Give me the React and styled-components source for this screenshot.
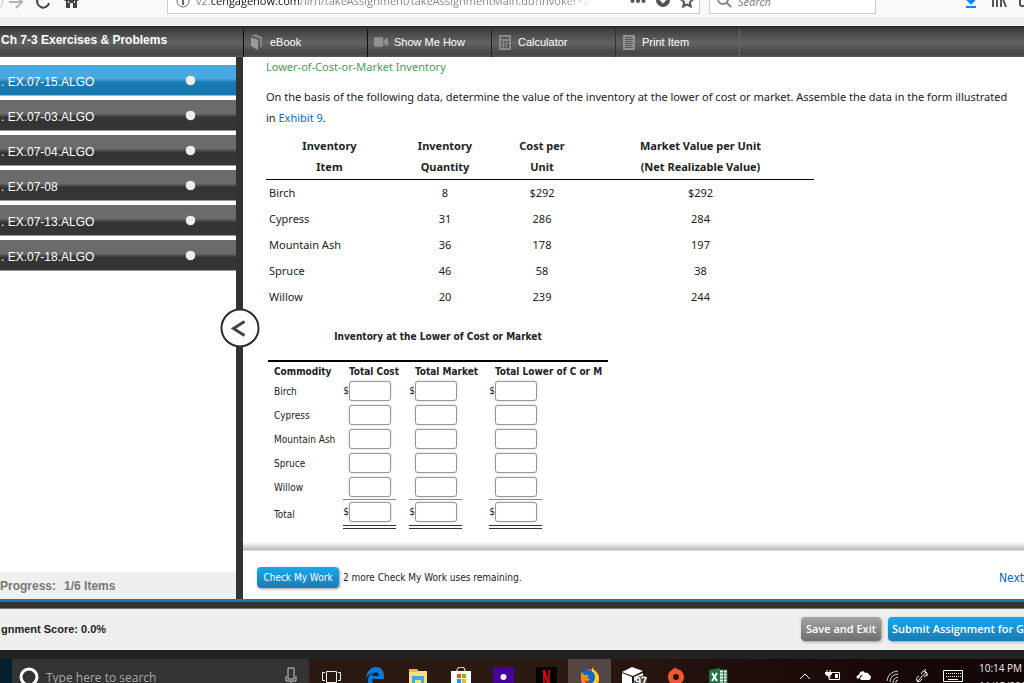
import React from "react";
import styled, { createGlobalStyle } from "styled-components";
import { FaVideo } from "react-icons/fa";

const assignments = [
    "EX.07-15.ALGO",
    "EX.07-03.ALGO",
    "EX.07-04.ALGO",
    "EX.07-08",
    "EX.07-13.ALGO",
    "EX.07-18.ALGO",
];

const inventory = [
    { item: "Birch", quantity: "8", cost: "$292", market: "$292" },
    { item: "Cypress", quantity: "31", cost: "286", market: "284" },
    { item: "Mountain Ash", quantity: "36", cost: "178", market: "197" },
    { item: "Spruce", quantity: "46", cost: "58", market: "38" },
    { item: "Willow", quantity: "20", cost: "239", market: "244" },
];

const answerColumns = ["Total Cost", "Total Market", "Total Lower of C or M"];

const App = () => (
    <Screen>
        <GlobalStyle />
        <BrowserBar />
        <CourseHeader />
        <Main>
            <Sidebar />
            <Divider>
                <CollapseButton type="button" aria-label="Collapse list">
                    <svg width="16" height="18" viewBox="0 0 16 18" fill="none" stroke="#444" strokeWidth="3">
                        <path d="M14 2 L3 9 L14 16" />
                    </svg>
                </CollapseButton>
            </Divider>
            <Content>
                <Question>
                    <Topic>Lower-of-Cost-or-Market Inventory</Topic>
                    <Paragraph>
                        On the basis of the following data, determine the value of the inventory at the lower of cost or market. Assemble the data in the form illustrated
                        <br />
                        in <Link href="#exhibit9">Exhibit 9</Link>.
                    </Paragraph>
                    <InventoryTable />
                    <AnswerTable />
                </Question>
                <CheckBar>
                    <CheckButton type="button">Check My Work</CheckButton>
                    <span>2 more Check My Work uses remaining.</span>
                    <NextLink href="#next">Next</NextLink>
                </CheckBar>
            </Content>
        </Main>
        <BlueRule />
        <Footer>
            <Score>gnment Score: 0.0%</Score>
            <SaveButton type="button">Save and Exit</SaveButton>
            <SubmitButton type="button">Submit Assignment for Grading</SubmitButton>
        </Footer>
        <Taskbar />
    </Screen>
)

const BrowserBar = () => (
    <Browser>
        <NavIcons>
            <svg width="84" height="24" viewBox="0 0 84 24" fill="none">
                <path d="M0 0 A22 22 0 0 1 0 23" stroke="#ccc" />
                <path d="M9 16 H21 M16 10 L22 16 L16 22" stroke="#b2b2b2" strokeWidth="2" />
                <path d="M49 17 A6 6 0 1 1 47 11" stroke="#444" strokeWidth="2" />
                <path d="M50 8 V14 H44 Z" fill="#444" />
                <path d="M64 15 L71.500 8 L79 15 H77 V22 H73 V17 H70 V22 H66 V15 Z" fill="#444" />
                <path d="M68 16 H69 M74 16 H75" stroke="#f9f9fa" strokeWidth="2" />
            </svg>
        </NavIcons>
        <AddressBar>
            <svg width="14" height="14" viewBox="0 0 14 14" fill="none" stroke="#666">
                <circle cx="7" cy="7" r="6" />
                <path d="M7 6 V11 M7 3 V5" strokeWidth="2" />
            </svg>
            <Address>
                v2.<b>cengagenow.com</b>/ilrn/takeAssignment/takeAssignmentMain.do?invoker=a
            </Address>
            <svg width="16" height="14" viewBox="0 0 16 14" fill="#555">
                <circle cx="2.500" cy="7" r="2" /><circle cx="8" cy="7" r="2" /><circle cx="13.500" cy="7" r="2" />
            </svg>
            <svg width="14" height="14" viewBox="0 0 14 14">
                <path d="M0 0 H14 V6 A7 7 0 0 1 0 6 Z" fill="#555" />
                <path d="M4 5 L7 8 L10 5" stroke="#fff" strokeWidth="2" fill="none" />
            </svg>
            <svg width="14" height="14" viewBox="0 0 14 14" fill="none" stroke="#555" strokeWidth="2">
                <path d="M7 1 L8.800 5 L13 5.500 L9.800 8.300 L10.800 12.500 L7 10.300 L3.200 12.500 L4.200 8.300 L1 5.500 L5.200 5 Z" />
            </svg>
        </AddressBar>
        <SearchBox>
            <svg width="16" height="16" viewBox="0 0 16 16" fill="none" stroke="#888" strokeWidth="2">
                <circle cx="7" cy="6" r="5" />
                <path d="M10 9 L15 14" />
            </svg>
            <SearchInput type="text" placeholder="Search" aria-label="Search the web" />
        </SearchBox>
        <BrowserTools>
            <svg width="60" height="24" viewBox="0 0 60 24" fill="none">
                <path d="M7 6 V17 M2 12 L7 17 L12 12" stroke="#0a84ff" strokeWidth="2.500" />
                <path d="M2 21 H12" stroke="#0a84ff" strokeWidth="2" />
                <path d="M29 8 V21 M33 8 V21 M37 8 V21 M37 8 L42 21" stroke="#555" strokeWidth="2" />
                <path d="M68 8 H57 Q56 8 56 10 V18 Q56 20 58 20 H68" stroke="#555" strokeWidth="2" />
            </svg>
        </BrowserTools>
    </Browser>
)

const CourseHeader = () => (
    <Header>
        <HeaderTitle>Ch 7-3 Exercises &amp; Problems</HeaderTitle>
        <Tool type="button" $edge="#111">
            <svg width="14" height="16" viewBox="0 0 14 16" fill="#999">
                <path d="M1 3 L8 6 V16 L1 12 Z" />
                <path d="M1 2 L5 0 L12 3 V13 L10 13 V5 L3 2 Z" fill="#858585" />
            </svg>
            eBook
        </Tool>
        <Tool type="button" $edge="#111">
            <FaVideo size={14} color="#909090" />
            Show Me How
        </Tool>
        <Tool type="button" $edge="#222">
            <svg width="14" height="15" viewBox="-1 0 14 15">
                <path d="M0 0 H12 V15 H0 Z" fill="#888" />
                <path d="M2 2 H10 V4 H2 Z M2 6 H4 V8 H2 Z M5 6 H7 V8 H5 Z M8 6 H10 V8 H8 Z M2 9 H4 V10 H2 Z M5 9 H7 V10 H5 Z M8 9 H10 V13 H8 Z M2 11 H4 V13 H2 Z M5 11 H7 V13 H5 Z" fill="#555" />
            </svg>
            Calculator
        </Tool>
        <Tool type="button" $edge="#333">
            <svg width="14" height="15" viewBox="-1 0 14 15">
                <path d="M0 0 H12 V15 H0 Z" fill="#909090" />
                <path d="M2 2.500 H9 M2 4.500 H10 M2 6.500 H9 M2 8.500 H10 M2 10.500 H9 M2 12.500 H10" stroke="#555" />
            </svg>
            Print Item
        </Tool>
        <ToolEnd />
    </Header>
)

const Sidebar = () => (
    <Aside>
        <AssignmentList>
            {assignments.map((name, i) => (
                <AssignmentRow key={name}>
                    <AssignmentLink href={"#" + name} $active={i === 0}>
                        <span>. {name}</span>
                        <Dot />
                    </AssignmentLink>
                </AssignmentRow>
            ))}
        </AssignmentList>
        <Progress>
            <span>Progress:</span>
            <span>1/6 Items</span>
        </Progress>
    </Aside>
)

const InventoryTable = () => (
    <DataTable>
        <colgroup>
            <Col $width={127} /><Col $width={104} /><Col $width={90} /><Col $width={227} />
        </colgroup>
        <thead>
            <tr>
                <DataHead>Inventory<br />Item</DataHead>
                <DataHead>Inventory<br />Quantity</DataHead>
                <DataHead>Cost per<br />Unit</DataHead>
                <DataHead>Market Value per Unit<br />(Net Realizable Value)</DataHead>
            </tr>
        </thead>
        <tbody>
            {inventory.map((row) => (
                <tr key={row.item}>
                    <DataCell $left>{row.item}</DataCell>
                    <DataCell>{row.quantity}</DataCell>
                    <DataCell>{row.cost}</DataCell>
                    <DataCell>{row.market}</DataCell>
                </tr>
            ))}
        </tbody>
    </DataTable>
)

const AnswerTable = () => (
    <Answers>
        <caption>Inventory at the Lower of Cost or Market</caption>
        <colgroup>
            <Col $width={75} /><Col $width={66} /><Col $width={80} /><Col $width={119} />
        </colgroup>
        <thead>
            <tr>
                <AnswerHead>Commodity</AnswerHead>
                {answerColumns.map((column) => <AnswerHead key={column}>{column}</AnswerHead>)}
            </tr>
        </thead>
        <tbody>
            {inventory.map(({ item }, i) => (
                <AnswerRow key={item} name={item} dollar={i === 0} />
            ))}
            <AnswerRow name="Total" dollar total />
        </tbody>
    </Answers>
)

const AnswerRow = ({ name, dollar, total }) => (
    <tr>
        <AnswerLabel scope="row">{name}</AnswerLabel>
        {answerColumns.map((column) => (
            <AnswerCell key={column}>
                <Amount $total={total}>
                    <Dollar>{dollar ? "$" : ""}</Dollar>
                    <AmountInput type="text" aria-label={name + " " + column} />
                </Amount>
            </AnswerCell>
        ))}
    </tr>
)

const Taskbar = () => (
    <Tasks>
        <StartEdge />
        <TaskSearch>
            <svg width="20" height="20" viewBox="0 0 20 20" fill="none" stroke="#fff" strokeWidth="3">
                <circle cx="10" cy="10" r="8" />
            </svg>
            <TaskInput type="text" placeholder="Type here to search" aria-label="Type here to search" />
            <svg width="12" height="20" viewBox="0 0 12 20" fill="none" stroke="#ccc">
                <path d="M3 1 H9 V12 H3 Z M1 9 V14 H11 V9 M6 14 V18 M3 18 H9" />
            </svg>
        </TaskSearch>
        <TaskButton type="button" aria-label="Task view">
            <svg width="20" height="24" viewBox="0 0 20 24" fill="none" stroke="#eee">
                <path d="M4.500 4.500 H14.500 V15.500 H4.500 Z M3 5.500 H0.500 V13.500 H3 M16 5.500 H18.500 V13.500 H16" />
            </svg>
        </TaskButton>
        <TaskButton type="button" aria-label="Edge">
            <svg width="20" height="24" viewBox="0 0 20 24">
                <path d="M1 11 C2 4 6 0 11 0 C17 0 19 5 19 9 V12 H7 C7 18 13 19 18 16 V20 C11 24 2 21 3 13 C3 9 6 7 9 6 C5 6 3 8 1 11 Z M7 9 H14 C14 4 8 4 7 9 Z" fill="#0a7ad8" fillRule="evenodd" />
            </svg>
        </TaskButton>
        <TaskButton type="button" aria-label="File explorer">
            <svg width="20" height="24" viewBox="0 0 20 24">
                <path d="M1 2 H9 L10 4 H19 V22 H1 Z" fill="#fbdc7c" />
                <path d="M1 2 H9 L10 4 L9 5 H1 Z" fill="#e6b845" />
                <path d="M4 9 H16 V22 H13 V13 H7 V22 H4 Z" fill="#3fa9e6" />
            </svg>
        </TaskButton>
        <TaskButton type="button" aria-label="Store">
            <svg width="20" height="24" viewBox="0 0 20 24">
                <path d="M6 5 V3 Q6 0 10 0 Q14 0 14 3 V5" fill="none" stroke="#fff" />
                <path d="M0 4 H20 V24 H0 Z" fill="#fff" />
                <path d="M6 7 H10 V11 H6 Z" fill="#f25022" />
                <path d="M11 7 H15 V11 H11 Z" fill="#7fba00" />
                <path d="M6 12 H10 V16 H6 Z" fill="#00a4ef" />
                <path d="M11 12 H15 V16 H11 Z" fill="#ffb900" />
            </svg>
        </TaskButton>
        <TaskButton type="button" aria-label="Music">
            <svg width="21" height="24" viewBox="0 0 21 24">
                <path d="M0 0 H21 V24 H0 Z" fill="#46009c" />
                <circle cx="10.500" cy="10" r="3" fill="#f4eefa" />
            </svg>
        </TaskButton>
        <TaskButton type="button" aria-label="Netflix">
            <svg width="21" height="24" viewBox="0 0 21 24">
                <path d="M0 0 H21 V24 H0 Z" fill="#000" />
                <path d="M8 3 V20 M13 3 V20" stroke="#b1060f" strokeWidth="2" />
                <path d="M8 3 L13 20" stroke="#e50914" strokeWidth="2" />
            </svg>
        </TaskButton>
        <TaskButton type="button" aria-label="Firefox" $open>
            <svg width="20" height="24" viewBox="0 0 20 24">
                <circle cx="10" cy="11" r="9" fill="#ff4a36" />
                <path d="M12 0 C13 3 19 5 19 12 C19 17 15 20 10 20 C14 16 16 10 12 5 Z" fill="#ffd02e" />
                <path d="M3 4 C7 2 10 3 14 6 C16 10 15 16 10 16 C6 16 4 13 5 9 Z" fill="#0a67c9" />
                <path d="M1 5 L4 8 L9 8 L7 11 L10 12 C9 15 5 14 4 12 C5 18 10 19 14 17 C9 22 0 19 1 10 Z" fill="#ff8a1c" />
            </svg>
        </TaskButton>
        <TaskButton type="button" aria-label="Mail">
            <svg width="28" height="24" viewBox="-3 0 28 24">
                <path d="M0 5 L10 0 L21 4 L11 9 Z M0 6 L10 10 V24 H0 Z M12 10 L21 6 V12 L12 20 Z" fill="#fff" />
                <circle cx="20" cy="17" r="8" fill="#444" stroke="#888" />
                <text x="13" y="18" fontFamily="Liberation Sans, sans-serif" fontSize="11" fontWeight="bold" fill="#fff">97</text>
            </svg>
        </TaskButton>
        <TaskButton type="button" aria-label="Origin">
            <svg width="16" height="24" viewBox="0 0 16 24">
                <path d="M9 0 L8 2 C13 2 16 6 16 10 C16 15 12 17 8 20 L7 18 C3 18 0 14 0 10 C0 5 4 2 9 0 Z M8 7 A3 3 0 1 0 8 13 A3 3 0 1 0 8 7 Z" fill="#f0592b" fillRule="evenodd" />
            </svg>
        </TaskButton>
        <TaskButton type="button" aria-label="Excel">
            <svg width="20" height="24" viewBox="0 0 20 24">
                <path d="M10 3 H18 V17 H10 Z" fill="#fff" stroke="#217346" />
                <path d="M11 6 H18 M11 9 H18 M11 12 H18 M11 15 H18 M14.500 3 V17" stroke="#217346" />
                <path d="M0 3 L11 1 V20 L0 18 Z" fill="#217346" />
                <path d="M3 6 L8 14 M8 6 L3 14" stroke="#fff" strokeWidth="2" />
            </svg>
        </TaskButton>
        <Tray>
            <svg width="12" height="24" viewBox="0 0 12 24" fill="none" stroke="#fff">
                <path d="M1 12 L6 7 L11 12" />
            </svg>
            <svg width="16" height="24" viewBox="0 0 16 24" fill="none" stroke="#fff">
                <path d="M6 5.500 H14.500 V12.500 H4 V10" />
                <path d="M2 3 V5 M5 3 V5 M3.500 8 V10 H6" />
                <path d="M0 5 H7 V7 L5 9 H2 L0 7 Z M10 7 H13 V11 H10 Z" fill="#fff" stroke="none" />
            </svg>
            <svg width="16" height="24" viewBox="0 0 16 24" fill="#fff">
                <path d="M2 12 C0 11 0 8 3 8 C3 4 8 3 9 6 C12 5 13 7 13 8 C16 8 15 13 13 13 H6 C3 13 4 9 7 9 C6 7 3 9 4 10 Z" />
            </svg>
            <svg width="14" height="24" viewBox="0 0 14 24" fill="none" stroke="#ccc">
                <path d="M1 14 Q2 5 12 4 M4 15 Q4 8 12 7 M7 16 Q7 11 12 10 M10 16 Q9 13 12 13" />
            </svg>
            <svg width="14" height="24" viewBox="0 0 14 24" fill="none" stroke="#fff">
                <path d="M2 15 L11 5 M6 7 Q8 3 10 4 L12 6 Q13 8 9 10 M9 4 L11 2 M4 9 Q0 11 2 14 Q5 16 7 12 M11 8 L13 8" />
            </svg>
            <svg width="20" height="24" viewBox="0 0 20 24" fill="none" stroke="#fff">
                <path d="M0.500 3.500 H19.500 V14.500 H0.500 Z" />
                <path d="M3 6.500 H18 M3 9.500 H18" strokeDasharray="1 1" />
                <path d="M5 12.500 H15" />
            </svg>
        </Tray>
        <Clock>
            <span>10:14 PM</span>
            <span>11/15/2017</span>
        </Clock>
    </Tasks>
)

export default App

const sans = `"Liberation Sans", Arial, sans-serif`;
const wide = `"Noto Sans", Verdana, sans-serif`;
const condensed = `"DejaVu Sans Condensed", Tahoma, sans-serif`;
const system = `"Open Sans", "Segoe UI", sans-serif`;

const GlobalStyle = createGlobalStyle`
    * {
        box-sizing: border-box;
    }
    body {
        margin: 0;
        overflow: hidden;
        font-family: ${sans};
        color: #222;
    }
    button, input {
        font-family: inherit;
        margin: 0;
    }
    svg {
        flex-shrink: 0;
        display: block;
    }
`;

const Screen = styled.div`
    display: flex;
    flex-direction: column;
    height: 100vh;
    overflow: hidden;
    background: #fff;
`;

const Browser = styled.div`
    display: flex;
    align-items: flex-end;
    flex: 0 0 26px;
    height: 26px;
    overflow: hidden;
    padding-bottom: 12px;
    background: linear-gradient(#f9f9fa 17px, #eee 17px, #eee 25px, #fff 25px);
`;

const NavIcons = styled.div`
    flex: 0 0 167px;
    padding-bottom: 4px;
`;

const AddressBar = styled.div`
    display: flex;
    align-items: center;
    gap: 10px;
    flex: 1;
    height: 26px;
    min-width: 0;
    padding: 0 5px 0 8px;
    background: #fff;
    border: 1px solid #ccc;
    svg:first-child {
        margin-right: -4px;
    }
`;

const Address = styled.div`
    flex: 1;
    overflow: hidden;
    white-space: nowrap;
    font-family: ${system};
    font-size: 11px;
    line-height: 18px;
    color: #888;
    margin-right: 26px;
    mask-image: linear-gradient(to right, #000 92%, transparent);
    b {
        font-weight: normal;
        color: #111;
    }
`;

const SearchBox = styled.div`
    display: flex;
    align-items: center;
    gap: 4px;
    flex: 0 0 167px;
    height: 26px;
    margin-left: 9px;
    padding-left: 6px;
    background: #fff;
    border: 1px solid #ccc;
`;

const SearchInput = styled.input`
    width: 120px;
    border: 0;
    background: none;
    font-family: ${system};
    font-size: 11px;
    &::placeholder {
        font-style: italic;
        color: #777;
    }
`;

const BrowserTools = styled.div`
    flex: 0 0 148px;
    padding-left: 88px;
    padding-bottom: 4px;
`;

const Header = styled.header`
    display: flex;
    align-items: flex-end;
    flex: 0 0 31px;
    background: linear-gradient(#333, #404040 10%, #636363 52%, #444 90%, #5a5a5a);
    border-top: 1px solid #222;
`;

const HeaderTitle = styled.h1`
    flex: 0 0 243px;
    margin: 0;
    font-size: 12px;
    line-height: 16px;
    color: #fff;
    padding: 0 0 9px 1px;
    white-space: nowrap;
`;

const Tool = styled.button`
    display: flex;
    align-items: center;
    gap: 6px;
    flex: 0 0 124px;
    height: 28px;
    padding: 0 0 2px 6px;
    border: 0;
    border-left: 1px solid ${(props) => props.$edge};
    background: none;
    color: #fff;
    font-size: 11px;
`;

const ToolEnd = styled.span`
    height: 28px;
    border-left: 1px solid #666;
`;

const Main = styled.main`
    display: flex;
    flex: 1;
    min-height: 0;
`;

const Aside = styled.aside`
    display: flex;
    flex-direction: column;
    justify-content: space-between;
    flex: 0 0 236px;
`;

const AssignmentList = styled.ul`
    list-style: none;
    margin: 0;
    padding: 8px 0 0;
`;

const AssignmentRow = styled.li`
    height: 31px;
    margin-bottom: 4px;
`;

const AssignmentLink = styled.a`
    display: flex;
    align-items: center;
    justify-content: space-between;
    height: 31px;
    padding-right: 41px;
    padding-left: 1px;
    color: #fff;
    font-size: 12px;
    line-height: 17px;
    text-decoration: none;
    background: ${(props) => props.$active
        ? "linear-gradient(#49a8e0 45%, #1a7ab3 58%, #1876ae)"
        : "linear-gradient(#6b6b6b 45%, #343434 58%, #353535)"};
    border-bottom: 1px solid ${(props) => props.$active ? "#8fc0dd" : "#999"};
    span:first-child {
        padding-top: 4px;
    }
`;

const Dot = styled.span`
    width: 9px;
    height: 9px;
    border-radius: 50%;
    background: #eee;
    box-shadow: 0 0 1px #fff;
`;

const Progress = styled.div`
    display: flex;
    gap: 8px;
    height: 27px;
    line-height: 28px;
    background: #efefef;
    color: #777;
    font-size: 12px;
    font-weight: bold;
`;

const Divider = styled.div`
    position: relative;
    flex: 0 0 7px;
    background: #333;
`;

/* sits over the divider and both panels */
const CollapseButton = styled.button`
    position: absolute;
    top: 50%;
    left: 50%;
    transform: translate(-50%, -50%);
    display: flex;
    align-items: center;
    justify-content: center;
    width: 39px;
    height: 39px;
    padding: 0 3px 0 0;
    border: 2px solid #2b2b2b;
    border-radius: 50%;
    background: #fff;
`;

const Content = styled.section`
    display: flex;
    flex-direction: column;
    flex: 1;
    min-width: 0;
    overflow: hidden;
`;

const Question = styled.div`
    flex: 1;
    padding-left: 23px;
    font-family: ${wide};
    font-size: 11px;
    line-height: 21px;
`;

const Topic = styled.h2`
    margin: 0 0 10px;
    font-size: 11px;
    font-weight: normal;
    line-height: 19px;
    color: #4f9a56;
`;

const Paragraph = styled.p`
    margin: 0 0 7px;
    white-space: nowrap;
`;

const Link = styled.a`
    color: #0b66c3;
    text-decoration: none;
`;

const Col = styled.col`
    width: ${(props) => props.$width}px;
`;

const DataTable = styled.table`
    table-layout: fixed;
    width: 548px;
    border-collapse: collapse;
`;

const DataHead = styled.th`
    padding: 0 0 2px;
    border-bottom: 1px solid #000;
`;

const DataCell = styled.td`
    height: 26px;
    padding: 0 3px;
    text-align: ${(props) => props.$left ? "left" : "center"};
`;

const Answers = styled.table`
    table-layout: fixed;
    width: 340px;
    margin: 19px 0 0 2px;
    border-collapse: collapse;
    font-family: ${condensed};
    font-size: 10px;
    line-height: 16px;
    caption {
        padding-bottom: 15px;
        font-weight: bold;
        white-space: nowrap;
    }
`;

const AnswerHead = styled.th`
    height: 17px;
    padding: 2px 0 0 6px;
    border-top: 2px solid #000;
    text-align: left;
    line-height: 15px;
    white-space: nowrap;
`;

const AnswerLabel = styled.th`
    padding: 3px 0 0 6px;
    font-weight: normal;
    text-align: left;
    white-space: nowrap;
`;

const AnswerCell = styled.td`
    padding: 0;
`;

const Amount = styled.div`
    display: flex;
    align-items: center;
    width: 53px;
    height: ${(props) => props.$total ? "30px" : "24px"};
    ${(props) => props.$total && `
        border-top: 1px solid #888;
        border-bottom: 4px double #333;
    `}
`;

const Dollar = styled.span`
    flex: 0 0 6px;
    text-align: right;
`;

const AmountInput = styled.input`
    width: 42px;
    height: 20px;
    padding: 0 3px;
    border: 1px solid #999;
    border-radius: 3px;
    background: #fff;
    font-size: 10px;
    box-shadow: 0 0 2px #bbb;
`;

const CheckBar = styled.div`
    display: flex;
    align-items: center;
    gap: 4px;
    flex: 0 0 57px;
    height: 57px;
    padding: 14px 0 0 14px;
    font-family: ${condensed};
    font-size: 10px;
    background: linear-gradient(#fff, #bbb 8px, #fff 9px);
`;

const GlossButton = styled.button`
    border: 0;
    border-radius: 4px;
    color: #fff;
    white-space: nowrap;
    background: linear-gradient(#14aaee, #1b7ab4);
    box-shadow: 1px 1px 3px #999;
`;

const CheckButton = styled(GlossButton)`
    height: 21px;
    width: 82px;
    padding: 0;
    font-size: 10px;
`;

const NextLink = styled(Link)`
    margin-left: auto;
    font-size: 12px;
`;

const BlueRule = styled.div`
    flex: 0 0 9px;
    background: linear-gradient(#1a78ae 3px, #333 3px);
`;

const Footer = styled.footer`
    display: flex;
    align-items: center;
    gap: 7px;
    flex: 0 0 42px;
    overflow: hidden;
    padding-bottom: 2px;
    background: #efefef;
    border-top: 1px solid #777;
`;

const Score = styled.strong`
    flex: 1;
    padding-left: 1px;
    font-size: 11px;
`;

const SaveButton = styled(GlossButton)`
    width: 80px;
    height: 24px;
    padding: 0;
    font-family: ${system};
    font-size: 11px;
    font-weight: 600;
    background: linear-gradient(#a5a5a5, #6e6e6e);
`;

const SubmitButton = styled(SaveButton)`
    width: 136px;
    padding-left: 4px;
    overflow: hidden;
    text-align: left;
    border-radius: 4px 0 0 4px;
    background: linear-gradient(#14aaee, #1b7ab4);
`;

const Tasks = styled.div`
    display: flex;
    align-items: flex-start;
    flex: 0 0 33px;
    height: 33px;
    overflow: hidden;
    border-top: 9px solid #222;
    background: linear-gradient(to right, #2a1710, #2b1a13 55%, #1d0c0a 75%, #120606);
`;

const StartEdge = styled.div`
    flex: 0 0 12px;
    height: 40px;
    background: #03202c;
`;

const TaskSearch = styled.div`
    display: flex;
    align-items: center;
    flex: 0 0 297px;
    height: 36px;
    margin-right: 1px;
    padding: 0 12px 0 7px;
    background: #333;
`;

const TaskInput = styled.input`
    flex: 1;
    min-width: 0;
    padding: 0 0 0 7px;
    border: 0;
    background: none;
    color: #fff;
    font-family: ${system};
    font-size: 12px;
    &::placeholder {
        color: #aaa;
    }
`;

const TaskButton = styled.button`
    display: flex;
    justify-content: center;
    flex: 0 0 43px;
    height: 40px;
    padding: 8px 0 0;
    border: 0;
    background: ${(props) => props.$open ? "#544642" : "none"};
`;

const Tray = styled.div`
    display: flex;
    justify-content: space-between;
    width: 164px;
    margin-left: auto;
    padding-top: 8px;
`;

const Clock = styled.div`
    display: flex;
    flex-direction: column;
    flex: 0 0 61px;
    width: 61px;
    padding-left: 16px;
    font-family: ${system};
    font-size: 10px;
    line-height: 18px;
    color: #eee;
    white-space: nowrap;
`;
